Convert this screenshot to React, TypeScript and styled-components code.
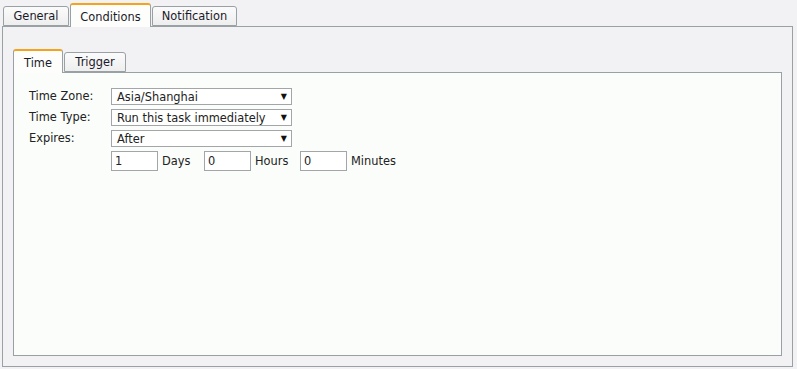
import styled, { createGlobalStyle } from "styled-components";

const GlobalStyle = createGlobalStyle`
  html, body {
    margin: 0;
    padding: 0;
    background: #f2f1f3;
  }
  body {
    font-family: "DejaVu Sans", Verdana, sans-serif;
    font-size: 11.4px;
    color: #222;
  }
`;

const Page = styled.div`
  width: 797px;
  height: 369px;
  padding: 3px 4px 0 2px;
  box-sizing: border-box;
`;

const TabBar = styled.div<{ $inset?: boolean }>`
  display: flex;
  align-items: flex-end;
  gap: 1px;
  padding-left: ${(p) => (p.$inset ? "0" : "1px")};
  height: 23px;
`;

const Tab = styled.div<{ $active?: boolean; $w: number }>`
  position: relative;
  z-index: 1;
  box-sizing: border-box;
  width: ${(p) => p.$w}px;
  height: ${(p) => (p.$active ? "24px" : "20px")};
  margin-bottom: ${(p) => (p.$active ? "-1px" : "0")};
  display: flex;
  align-items: center;
  justify-content: center;
  padding-top: ${(p) => (p.$active ? "1px" : "0")};
  border: 1px solid #9aa1a4;
  border-top: ${(p) => (p.$active ? "2px solid #f3a41c" : "1px solid #9aa1a4")};
  border-bottom: ${(p) => (p.$active ? "none" : "1px solid #9aa1a4")};
  border-radius: 3px 3px 0 0;
  background: ${(p) =>
    p.$active ? "#fdfefc" : "linear-gradient(#fbfbfb, #eeeeef)"};
  color: #1a1a2a;
  cursor: default;
`;

const OuterPanel = styled.div`
  box-sizing: border-box;
  height: 341px;
  border: 1px solid #9aa1a4;
  padding: 22px 10px 10px 10px;
  display: flex;
  flex-direction: column;
`;

const InnerPanel = styled.div`
  flex: 1;
  box-sizing: border-box;
  border: 1px solid #9aa1a4;
  background: #fbfdfa;
  padding: 15px 0 0 15px;
`;

const Form = styled.div`
  display: grid;
  grid-template-columns: 82px auto;
  row-gap: 4px;
  align-items: center;
`;

const Label = styled.div`
  color: #222;
  line-height: 17px;
`;

const Select = styled.div`
  box-sizing: border-box;
  width: 181px;
  height: 17px;
  border: 1px solid #a3a6a8;
  background: #fff;
  display: flex;
  align-items: center;
  justify-content: space-between;
  padding: 0 4px 0 5px;
  color: #222;
  white-space: nowrap;
`;

const Arrow = styled.span`
  font-size: 8px;
  color: #111;
`;

const DurationRow = styled.div`
  display: flex;
  align-items: center;
`;

const NumberBox = styled.div`
  box-sizing: border-box;
  width: 47px;
  height: 20px;
  border: 1px solid #a3a6a8;
  background: #fff;
  padding: 0 3px;
  display: flex;
  align-items: center;
`;

const Unit = styled.span<{ $w: number }>`
  width: ${(p) => p.$w}px;
  padding-left: 4px;
  box-sizing: border-box;
  color: #222;
`;

const fields = [
  { label: "Time Zone:", value: "Asia/Shanghai" },
  { label: "Time Type:", value: "Run this task immediately" },
  { label: "Expires:", value: "After" },
];

export default function App() {
  return (
    <>
      <GlobalStyle />
      <Page>
        <TabBar>
          <Tab $w={66}>General</Tab>
          <Tab $w={81} $active>
            Conditions
          </Tab>
          <Tab $w={85}>Notification</Tab>
        </TabBar>
        <OuterPanel>
          <TabBar $inset>
            <Tab $w={50} $active>
              Time
            </Tab>
            <Tab $w={62}>Trigger</Tab>
          </TabBar>
          <InnerPanel>
            <Form>
              {fields.map((f) => (
                <>
                  <Label key={f.label}>{f.label}</Label>
                  <Select key={f.value}>
                    {f.value}
                    <Arrow>▼</Arrow>
                  </Select>
                </>
              ))}
              <span />
              <DurationRow>
                <NumberBox>1</NumberBox>
                <Unit $w={46}>Days</Unit>
                <NumberBox>0</NumberBox>
                <Unit $w={49}>Hours</Unit>
                <NumberBox>0</NumberBox>
                <Unit $w={60}>Minutes</Unit>
              </DurationRow>
            </Form>
          </InnerPanel>
        </OuterPanel>
      </Page>
    </>
  );
}
